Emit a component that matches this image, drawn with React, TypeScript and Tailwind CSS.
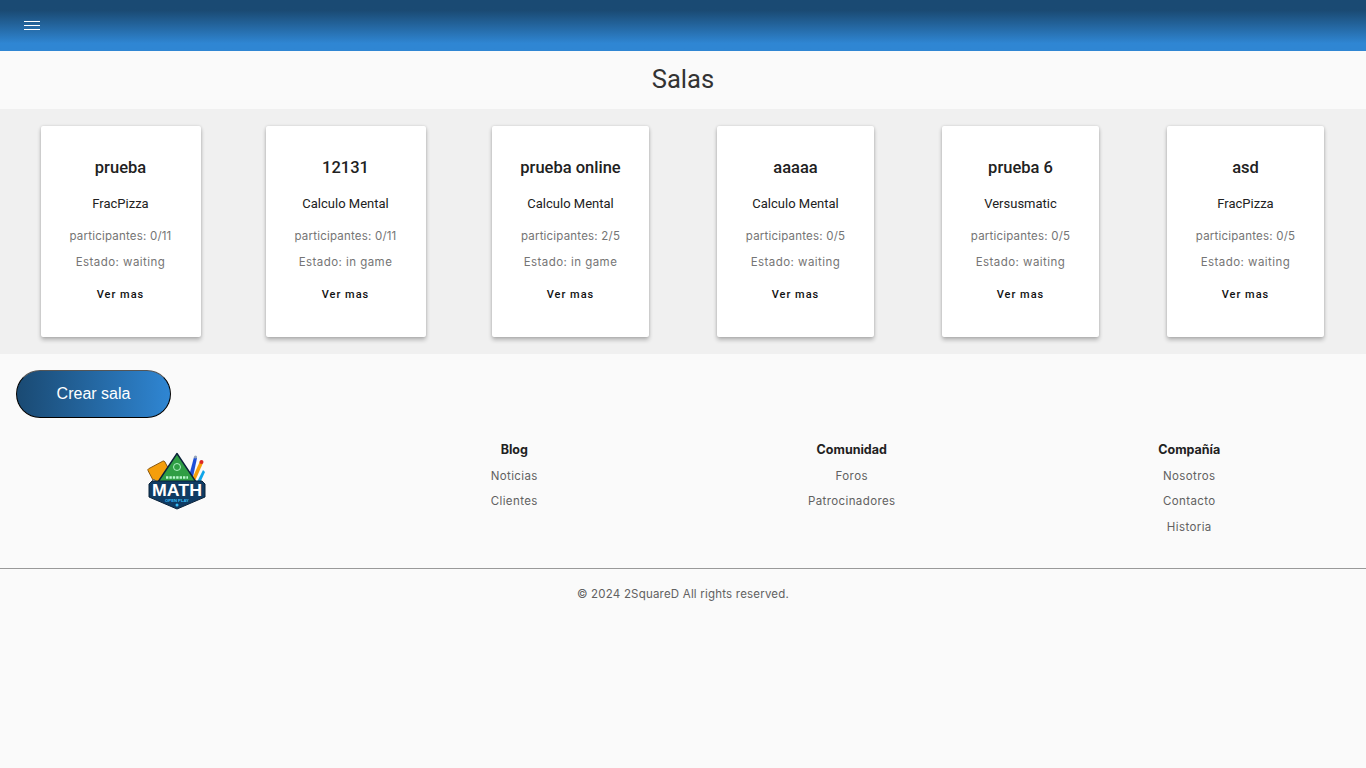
const rooms = [
  { name: "prueba", game: "FracPizza", players: "0/11", state: "waiting", width: "w-[160px]" },
  { name: "12131", game: "Calculo Mental", players: "0/11", state: "in game", width: "w-[160px]" },
  { name: "prueba online", game: "Calculo Mental", players: "2/5", state: "in game", width: "w-[157.5px]" },
  { name: "aaaaa", game: "Calculo Mental", players: "0/5", state: "waiting", width: "w-[157.5px]" },
  { name: "prueba 6", game: "Versusmatic", players: "0/5", state: "waiting", width: "w-[157.5px]" },
  { name: "asd", game: "FracPizza", players: "0/5", state: "waiting", width: "w-[157.5px]" },
];

const footerLinks = [
  { title: "Blog", links: ["Noticias", "Clientes"] },
  { title: "Comunidad", links: ["Foros", "Patrocinadores"] },
  { title: "Compañía", links: ["Nosotros", "Contacto", "Historia"] },
];

function RoomCard({ room }: { room: (typeof rooms)[number] }) {
  return (
    <div className={`${room.width} h-[211px] bg-white rounded-[2px] shadow-[0_3px_4px_rgba(0,0,0,0.24),0_0_3px_rgba(0,0,0,0.14)] flex flex-col items-center text-center`}>
      <h3 className="mt-[31px] h-[21px] leading-[21px] text-[16.5px] font-medium text-[#212121] font-['Roboto',sans-serif] whitespace-nowrap">{room.name}</h3>
      <p className="mt-[16px] h-[20px] leading-[20px] text-[13px] text-[#212121] font-['Roboto',sans-serif] whitespace-nowrap">{room.game}</p>
      <p className="mt-[12px] h-[20px] leading-[20px] text-[11.5px] tracking-[0.2px] text-[#757575] font-['Inter',sans-serif] whitespace-nowrap">participantes: {room.players}</p>
      <p className="mt-[6px] h-[20px] leading-[20px] text-[11.5px] tracking-[0.45px] text-[#757575] font-['Inter',sans-serif] whitespace-nowrap">Estado: {room.state}</p>
      <button className="mt-[13px] h-[20px] leading-[20px] text-[11px] font-medium tracking-[1px] text-[#111] font-['Roboto',sans-serif]">Ver mas</button>
    </div>
  );
}

function Logo() {
  return (
    <svg width="60" height="58" viewBox="0 0 60 58">
      {/* notebook */}
      <rect x="4" y="12" width="19" height="22" rx="1.5" fill="#f59e0b" stroke="#7c4a03" strokeWidth="0.8" transform="rotate(-28 13 22)" />
      <path d="M4 30 L10 39 L13 36 L7 27 Z" fill="#cbd5e1" stroke="#334155" strokeWidth="0.6" />
      {/* pencils */}
      <path d="M42 24 L47 5 L50 6 L46 25 Z" fill="#1d4ed8" />
      <circle cx="48.5" cy="5" r="1.6" fill="#94a3b8" />
      <path d="M45 27 L53 9 L56 11 L48 29 Z" fill="#f59e0b" />
      <circle cx="54.5" cy="10" r="2" fill="#dc2626" />
      <path d="M50 30 L56 18 L58 20 L53 31 Z" fill="#0ea5e9" />
      {/* triangle board */}
      <path d="M30 1.5 L49 30 L11 30 Z" fill="#2f9e44" stroke="#0b2239" strokeWidth="1.4" strokeLinejoin="round" />
      <circle cx="30" cy="15" r="3.5" fill="none" stroke="#bbf7d0" strokeWidth="0.9" />
      <path d="M19 25.5 H41" stroke="#bbf7d0" strokeWidth="2.4" strokeDasharray="2.4 1" />
      {/* banner */}
      <path d="M5 29 H55 L58 32 V45 L30 57 L2 45 V32 Z" fill="#0f3b63" stroke="#0b2239" strokeWidth="1" />
      <text x="30" y="44" textAnchor="middle" textLength="50" lengthAdjust="spacingAndGlyphs" fontFamily="'Liberation Sans',sans-serif" fontWeight="700" fontSize="17" fill="#ffffff">MATH</text>
      <text x="30" y="49.5" textAnchor="middle" fontFamily="'Liberation Sans',sans-serif" fontWeight="700" fontSize="4.2" fill="#38bdf8">OPEN PLAY</text>
      <circle cx="30" cy="53" r="1.5" fill="#38bdf8" />
    </svg>
  );
}

export default function App() {
  return (
    <div className="min-h-[768px] bg-[#fafafa] flex flex-col">
      <header className="h-[51px] shrink-0 bg-gradient-to-b from-[#1a4a73] from-[20%] to-[#2f86d3] to-[85%] flex items-center pl-6">
        <svg width="16" height="10" viewBox="0 0 16 10" className="mt-[1px]">
          <path d="M0 .5H16M0 4.5H16M0 8.5H16" stroke="#fff" strokeWidth="1" />
        </svg>
      </header>

      <h1 className="h-[58px] pb-[2px] flex items-center justify-center text-[25.6px] text-[#333] font-['Roboto',sans-serif]">Salas</h1>

      <section className="h-[245px] bg-[#f0f0f0] px-2 pt-[17px] grid grid-cols-6">
        {rooms.map((room, i) => (
          <div key={i} className="flex justify-center items-start">
            <RoomCard room={room} />
          </div>
        ))}
      </section>

      <div className="pl-4 pt-4">
        <button className="w-[155px] h-[48px] rounded-full bg-gradient-to-r from-[#1a4a73] to-[#2f86d3] border border-[#000] border-t-[#555] text-white text-[16px] font-['Liberation_Sans',sans-serif]">Crear sala</button>
      </div>

      <footer className="mt-[19px] h-[132px] px-2 grid grid-cols-4 border-b border-[#999] text-center font-['Inter',sans-serif]">
        <div className="flex justify-center pt-[15px]">
          <Logo />
        </div>
        {footerLinks.map((col) => (
          <div key={col.title} className="flex flex-col items-center">
            <h4 className="h-[25.7px] leading-[26px] text-[12.5px] font-bold text-[#212121]">{col.title}</h4>
            {col.links.map((link) => (
              <a key={link} className="h-[25.5px] leading-[27px] text-[11.5px] tracking-[0.4px] text-[#616161]">{link}</a>
            ))}
          </div>
        ))}
      </footer>

      <p className="mt-[16px] text-center leading-[18px] text-[11.5px] tracking-[0.2px] text-[#616161] font-['Inter',sans-serif]">© 2024 2SquareD All rights reserved.</p>
    </div>
  );
}
